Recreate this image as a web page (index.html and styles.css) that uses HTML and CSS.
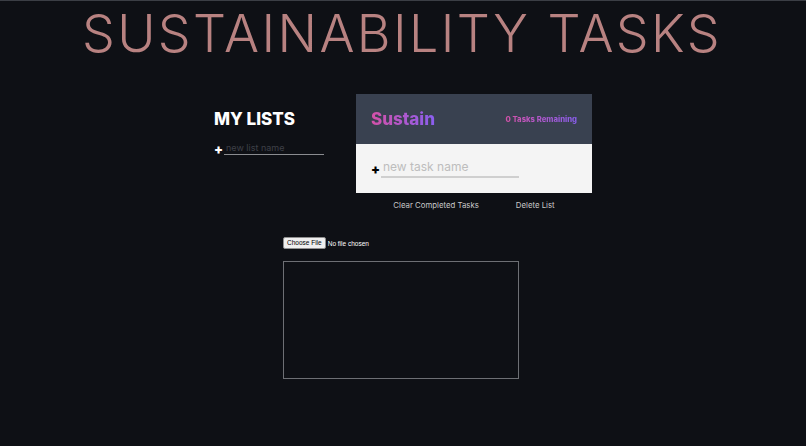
FILE: index.html
```html
<!DOCTYPE html>
<html>
<head>
<meta charset="utf-8">
<link rel="stylesheet" href="styles.css">
</head>
<body>
<h1 class="title">SUSTAINABILITY TASKS</h1>
<main class="board">
  <section class="lists">
    <h2 class="lists-title">MY LISTS</h2>
    <form class="new-list">
      <span class="plus">+</span>
      <input class="new-list-input" type="text" placeholder="new list name">
    </form>
  </section>
  <section class="todo">
    <div class="card">
      <div class="card-header">
        <h2 class="list-name">Sustain</h2>
        <p class="remaining">0 Tasks Remaining</p>
      </div>
      <div class="card-body">
        <form class="new-task">
          <span class="plus dark">+</span>
          <input class="new-task-input" type="text" placeholder="new task name">
        </form>
      </div>
    </div>
    <div class="actions">
      <button class="link-btn">Clear Completed Tasks</button>
      <button class="link-btn">Delete List</button>
    </div>
  </section>
</main>
<section class="upload">
  <div class="file-row">
    <span class="file-btn">Choose File</span>
    <span class="file-text">No file chosen</span>
  </div>
  <div class="preview"></div>
</section>
</body>
</html>
```
FILE: styles.css
```css
html, body {
  margin: 0;
  padding: 0;
}
body {
  background: #0e1015;
  border-top: 1px solid #3b3e45;
  height: 445px;
  font-family: Inter, "Liberation Sans", sans-serif;
  display: flex;
  flex-direction: column;
  align-items: center;
  overflow: hidden;
}
.title {
  margin: 0 0 0 -2px;
  padding-top: 7px;
  font-size: 52px;
  line-height: 52px;
  font-weight: 300;
  color: #b88281;
  letter-spacing: 2.4px;
  white-space: nowrap;
}
.board {
  margin-top: 34px;
  display: flex;
  width: 378px;
}
.lists {
  width: 142px;
  padding-top: 14px;
}
.lists-title {
  margin: 0;
  color: #fff;
  font-size: 17px;
  font-weight: 800;
  line-height: 22px;
}
.new-list {
  display: flex;
  align-items: center;
  margin-top: 12px;
}
.plus {
  color: #fff;
  font-size: 13px;
  font-weight: 900;
  width: 10px;
  line-height: 12px;
}
.plus.dark {
  color: #000;
}
.new-list-input {
  box-sizing: border-box;
  width: 100px;
  background: transparent;
  border: none;
  border-bottom: 1px solid #8a8c90;
  color: #fff;
  font-family: inherit;
  font-size: 9px;
  padding: 0 2px 1px;
  outline: none;
}
.new-list-input::placeholder {
  color: #3e4048;
}
.todo {
  width: 236px;
}
.card-header {
  background: #394150;
  height: 50px;
  display: flex;
  align-items: center;
  justify-content: space-between;
  padding: 0 15px 0 15px;
}
.list-name {
  margin: 0;
  font-size: 17px;
  font-weight: 800;
  background: linear-gradient(90deg, #d451a8, #8a5ff0);
  -webkit-background-clip: text;
  background-clip: text;
  color: transparent;
}
.remaining {
  margin: 0;
  font-size: 7.7px;
  font-weight: 800;
  background: linear-gradient(90deg, #d451a8, #8a5ff0);
  -webkit-background-clip: text;
  background-clip: text;
  color: transparent;
}
.card-body {
  background: #f4f4f4;
  height: 49px;
  display: flex;
  align-items: center;
  padding-left: 15px;
}
.new-task {
  display: flex;
  align-items: center;
}
.new-task-input {
  box-sizing: border-box;
  width: 138px;
  background: transparent;
  border: none;
  border-bottom: 2px solid #cfcfcf;
  font-family: inherit;
  font-size: 12px;
  padding: 0 2px 2px;
  outline: none;
}
.new-task-input::placeholder {
  color: #bdbdbd;
}
.actions {
  display: flex;
  justify-content: center;
  gap: 37px;
  margin-top: 7px;
}
.link-btn {
  background: none;
  border: none;
  padding: 0;
  color: #c9c9c9;
  font-family: inherit;
  font-size: 7.8px;
  cursor: pointer;
}
.upload {
  margin-top: 27px;
  margin-right: 4px;
  width: 236px;
}
.file-row {
  display: flex;
  align-items: center;
  gap: 2px;
}
.file-btn {
  background: #efefef;
  border: 1px solid #8f8f8f;
  border-radius: 2px;
  font-family: "Liberation Sans", sans-serif;
  font-size: 6.5px;
  color: #000;
  padding: 1px 3px;
  line-height: 8px;
}
.file-text {
  color: #fff;
  font-family: "Liberation Sans", sans-serif;
  font-size: 6.5px;
}
.preview {
  margin-top: 12px;
  height: 116px;
  border: 1px solid #6d6f74;
}
```
